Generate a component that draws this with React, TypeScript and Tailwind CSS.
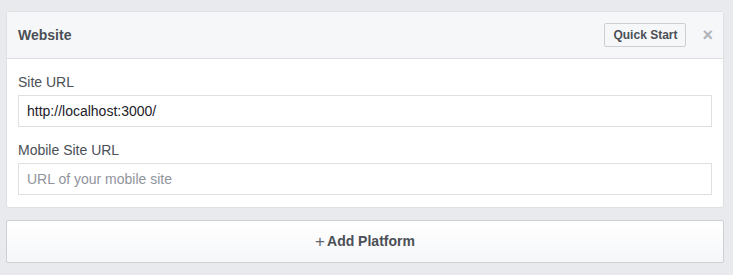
export default function App() {
  return (
    <div className="min-h-[275px] w-[733px] bg-[#e9eaed] pt-[11px] pl-[6px] font-['Liberation_Sans',Arial,sans-serif] text-[14px] leading-[17px]">
      <section className="w-[718px] rounded-[3px] border border-[#dddfe2] bg-white">
        <div className="flex h-[47px] items-center justify-between border-b border-[#dddfe2] bg-[#f6f7f9] pl-[11px] pr-[10px]">
          <h2 className="font-bold text-[#4b4f56]">Website</h2>
          <div className="flex items-center gap-[16px]">
            <button className="h-[24px] rounded-[2px] border border-[#ccd0d5] bg-[#f6f7f9] px-[8px] text-[12px] font-bold text-[#4b4f56]">
              Quick Start
            </button>
            <span className="text-[18px] font-bold leading-none text-[#b0b4ba]">×</span>
          </div>
        </div>
        <div className="px-[11px] pt-[15px] pb-[12px]">
          <label className="block text-[#4b4f56]">Site URL</label>
          <input
            className="mt-[4px] block h-[32px] w-[694px] border border-[#dddfe2] px-[8px] text-[#1d2129] outline-none"
            defaultValue="http://localhost:3000/"
          />
          <label className="mt-[15px] block text-[#4b4f56]">Mobile Site URL</label>
          <input
            className="mt-[4px] block h-[32px] w-[694px] border border-[#dddfe2] px-[8px] text-[#1d2129] outline-none placeholder:text-[#90949c]"
            placeholder="URL of your mobile site"
          />
        </div>
      </section>
      <button className="mt-[12px] flex h-[43px] w-[718px] items-center justify-center rounded-[2px] border border-[#ccd0d5] bg-gradient-to-b from-white to-[#f6f7f9] font-bold text-[#4b4f56]">
        <span className="mr-[2px] text-[17px] font-normal text-[#606770]">+</span>
        Add Platform
      </button>
    </div>
  );
}
